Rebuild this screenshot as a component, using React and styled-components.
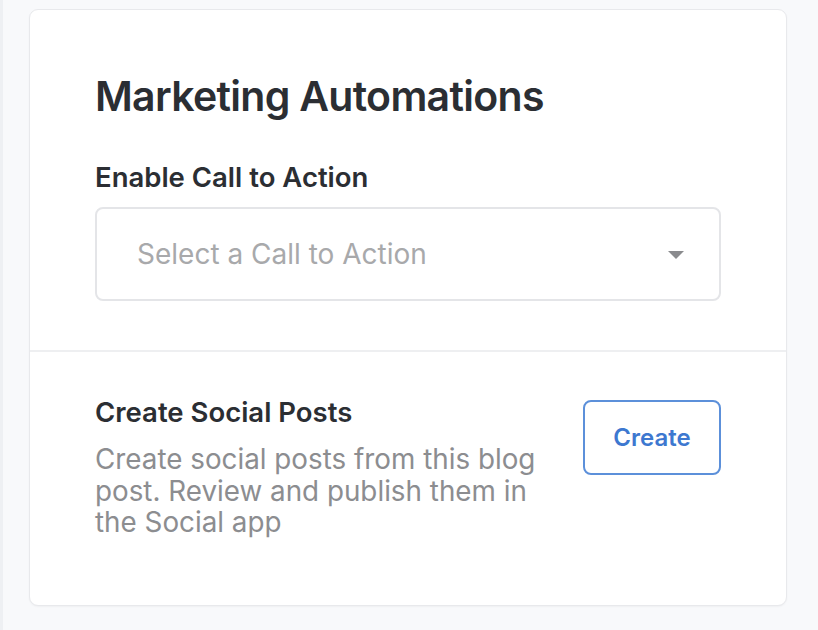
import styled, { createGlobalStyle } from "styled-components";

const GlobalStyle = createGlobalStyle`
  html, body {
    margin: 0;
    padding: 0;
    background: #f8f9fb;
    font-family: Inter, "Noto Sans", sans-serif;
  }
`;

const Page = styled.div`
  width: 818px;
  height: 630px;
  box-sizing: border-box;
  padding: 9px 0 0 26px;
  border-left: 3px solid #eef0f3;
`;

const Card = styled.div`
  background: #fff;
  border: 1px solid #e8e9ec;
  border-radius: 9px;
  box-shadow: 0 1px 2px rgba(0, 0, 0, 0.04);
  width: 758px;
  box-sizing: border-box;
`;

const Section = styled.div`
  padding: ${(p) => p.$pad};
  border-top: ${(p) => (p.$divided ? "2px solid #eeeff1" : "none")};
`;

const Title = styled.h2`
  margin: 0 0 40px;
  font-size: 41px;
  font-weight: 600;
  color: #2b2e33;
  letter-spacing: -0.7px;
  line-height: 49px;
`;

const Label = styled.div`
  font-size: 27.5px;
  font-weight: 600;
  color: #2b2e33;
  line-height: 32px;
  margin-bottom: 14px;
`;

const Select = styled.div`
  display: flex;
  align-items: center;
  justify-content: space-between;
  height: 94px;
  box-sizing: border-box;
  border: 2px solid #e4e5e8;
  border-radius: 8px;
  padding: 0 35px 0 40px;
  font-size: 28px;
  color: #a8a9ab;
`;

const Caret = styled.span`
  width: 0;
  height: 0;
  border-left: 8px solid transparent;
  border-right: 8px solid transparent;
  border-top: 8px solid #8a8b8e;
  margin-top: 2px;
`;

const Row = styled.div`
  display: flex;
  justify-content: space-between;
  align-items: flex-start;
`;

const Info = styled.div`
  width: 470px;
`;

const SubTitle = styled.div`
  font-size: 27.5px;
  font-weight: 600;
  color: #2b2e33;
  line-height: 32px;
  margin-bottom: 16px;
`;

const Desc = styled.p`
  margin: 0;
  font-size: 27.8px;
  line-height: 31.5px;
  color: #8c8d90;
`;

const Button = styled.button`
  width: 138px;
  height: 75px;
  margin-top: 4px;
  background: #fff;
  border: 2px solid #5c90da;
  border-radius: 8px;
  color: #3d78d0;
  font-family: inherit;
  font-size: 24px;
  font-weight: 600;
`;

export default function App() {
  return (
    <>
      <GlobalStyle />
      <Page>
        <Card>
          <Section $pad="62px 65px 49px 65px">
            <Title>Marketing Automations</Title>
            <Label>Enable Call to Action</Label>
            <Select>
              Select a Call to Action
              <Caret />
            </Select>
          </Section>
          <Section $divided $pad="44px 65px 66px 65px">
            <Row>
              <Info>
                <SubTitle>Create Social Posts</SubTitle>
                <Desc>
                  Create social posts from this blog post. Review and publish
                  them in the Social app
                </Desc>
              </Info>
              <Button>Create</Button>
            </Row>
          </Section>
        </Card>
      </Page>
    </>
  );
}
